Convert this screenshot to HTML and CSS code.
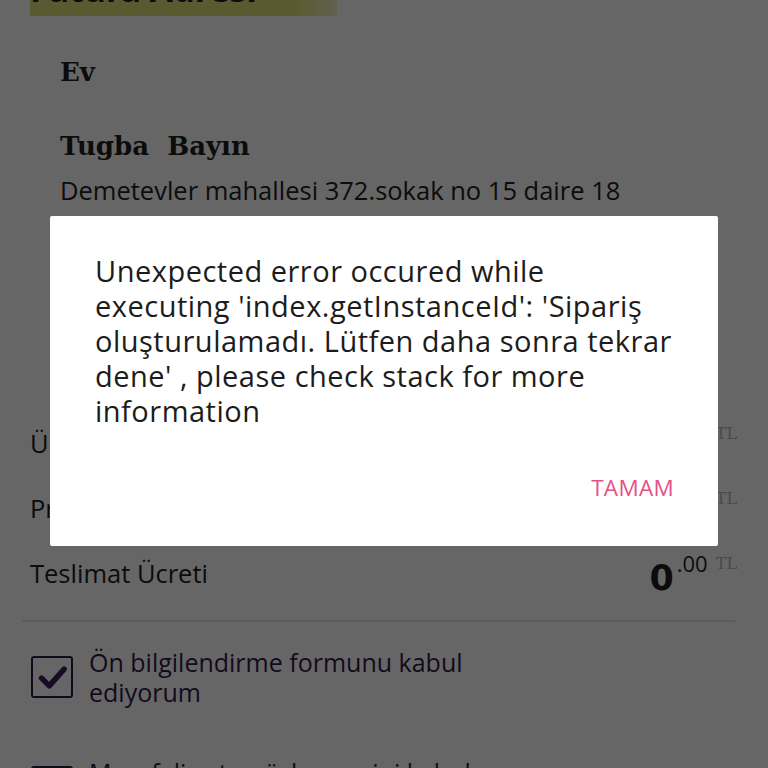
FILE: index.html
```html
<!DOCTYPE html>
<html lang="tr">
<head>
<meta charset="utf-8">
<title>Sipariş</title>
<link rel="stylesheet" href="styles.css">
</head>
<body>
<div class="page">
  <h2 class="section-title"><span class="hl">Fatura Adresi</span></h2>
  <div class="address">
    <div class="addr-label">Ev</div>
    <div class="addr-person">Tugba&nbsp;&nbsp;Bayın</div>
    <div class="addr-line">Demetevler mahallesi 372.sokak no 15 daire 18</div>
  </div>
  <div class="summary">
    <div class="row"><span class="row-label">Ürünler Toplamı</span><span class="price"><b class="int">0</b><span class="dec">.00</span><span class="cur">TL</span></span></div>
    <div class="row"><span class="row-label">Promosyon</span><span class="price"><b class="int">0</b><span class="dec">.00</span><span class="cur">TL</span></span></div>
    <div class="row"><span class="row-label">Teslimat Ücreti</span><span class="price"><b class="int">0</b><span class="dec">.00</span><span class="cur">TL</span></span></div>
  </div>
  <hr class="divider">
  <label class="check">
    <span class="box checked"><svg viewBox="0 0 24 24" width="31" height="31"><path d="M3.5 12.5 L9.5 18.5 L21 5.5" fill="none" stroke="#3a1d5c" stroke-width="4.2" stroke-linecap="round" stroke-linejoin="round"/></svg></span>
    <span class="check-text">Ön bilgilendirme formunu kabul<br>ediyorum</span>
  </label>
  <label class="check">
    <span class="box"></span>
    <span class="check-text">Mesafeli satış sözleşmesini kabul<br>ediyorum</span>
  </label>
</div>

<div class="overlay">
  <div class="dialog" role="alertdialog">
    <p class="dialog-msg">Unexpected error occured while<br>executing 'index.getInstanceId': 'Sipariş<br>oluşturulamadı. Lütfen daha sonra tekrar<br>dene' , please check stack for more<br>information</p>
    <div class="dialog-actions">
      <button class="dialog-btn">TAMAM</button>
    </div>
  </div>
</div>
</body>
</html>
```

FILE: styles.css
```css
html, body {
  margin: 0;
  padding: 0;
  background: #ffffff;
  height: 768px;
  overflow: hidden;
}

.page {
  font-family: "Open Sans", "Noto Sans", sans-serif;
  color: #1e1e1e;
  padding: 0 30px;
  height: 768px;
  overflow: hidden;
}

.section-title {
  margin: -30px 0 0 0;
  font-size: 34px;
  line-height: 38px;
  font-weight: 700;
  font-family: "Noto Sans", sans-serif;
}

.hl {
  display: inline-block;
  padding-right: 80px;
  padding-bottom: 8px;
  background: linear-gradient(to right, #e2e27a 0 86%, rgba(226, 226, 122, 0.45) 100%);
  background-size: 100% 17px;
  background-position: 0 100%;
  background-repeat: no-repeat;
}

.address {
  padding: 40px 30px 0 30px;
}

.addr-label {
  font-family: "DejaVu Serif", serif;
  font-weight: 700;
  font-size: 26px;
  line-height: 32px;
}

.addr-person {
  font-family: "DejaVu Serif", serif;
  font-weight: 700;
  font-size: 26px;
  line-height: 32px;
  margin-top: 42px;
}

.addr-line {
  font-size: 25.5px;
  line-height: 30px;
  margin-top: 13px;
  color: #222;
}

.summary {
  margin-top: 223px;
  display: flex;
  flex-direction: column;
  gap: 35px;
}

.row {
  display: flex;
  justify-content: space-between;
  align-items: center;
  height: 30px;
  font-size: 25.5px;
}

.price {
  display: flex;
  align-items: flex-start;
  line-height: 1;
  margin-right: 1px;
}

.int {
  font-size: 35px;
  font-weight: 700;
  font-family: "DejaVu Sans", sans-serif;
  line-height: 34px;
  margin-top: 9px;
}

.dec {
  font-size: 22px;
  margin-left: 3px;
}

.cur {
  font-size: 16px;
  margin-top: 4px;
  margin-left: 8px;
  color: #b8b8b8;
  font-family: "DejaVu Serif", serif;
}

.divider {
  border: 0;
  border-top: 2px solid #e6e6e6;
  margin: 32px 3px 0 -8px;
}

.check {
  display: flex;
  align-items: flex-start;
  gap: 16px;
  margin-top: 32px;
  color: #321a4c;
  font-size: 25px;
  line-height: 30px;
}

.check + .check {
  margin-top: 57px;
}

.box {
  width: 38px;
  height: 38px;
  border: 2px solid #2b1a45;
  border-radius: 3px;
  display: flex;
  align-items: center;
  justify-content: center;
  flex: none;
  margin-top: 2px;
  margin-left: 1px;
}

.check-text {
  margin-top: -7px;
}

.overlay {
  position: fixed;
  inset: 0;
  background: rgba(0, 0, 0, 0.6);
  display: flex;
  justify-content: center;
  align-items: flex-start;
  padding-top: 216px;
  box-sizing: border-box;
}

.dialog {
  width: 668px;
  height: 330px;
  background: #fff;
  border-radius: 2px;
  box-sizing: border-box;
  padding: 37px 40px 0 45px;
  display: flex;
  flex-direction: column;
  font-family: "Open Sans", sans-serif;
}

.dialog-msg {
  margin: 0;
  font-size: 29px;
  line-height: 35px;
  letter-spacing: 0.5px;
  color: #1c1c1c;
  white-space: nowrap;
}

.dialog-actions {
  display: flex;
  justify-content: flex-end;
  margin-top: 38px;
}

.dialog-btn {
  border: 0;
  background: transparent;
  color: #e6508a;
  font-family: "Open Sans", sans-serif;
  font-size: 22.5px;
  padding: 6px 4px;
  letter-spacing: 0.3px;
}
```
